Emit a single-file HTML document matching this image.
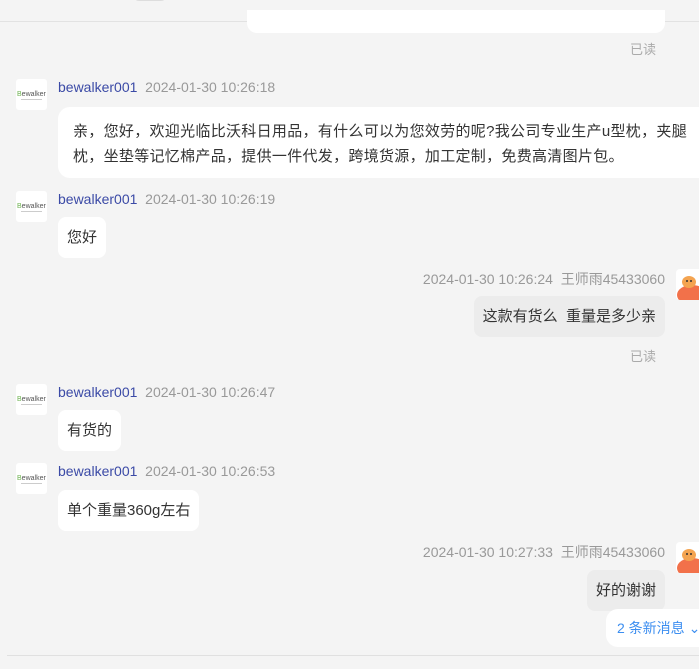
<!DOCTYPE html>
<html><head><meta charset="utf-8"><style>
*{margin:0;padding:0;box-sizing:border-box}
body{width:699px;height:669px;background:#f4f4f4;position:relative;overflow:hidden;font-family:"Liberation Sans","Noto Sans CJK SC",sans-serif;font-size:14px;color:#333}
.a{position:absolute}
.name{color:#3b4aa6;font-size:14px;white-space:nowrap}
.time{color:#999;font-size:14px;white-space:nowrap}
.b{position:absolute;background:#fff;border-radius:8px;padding:0 9px;line-height:41px;white-space:nowrap;font-size:15px}
.g{background:#ececec}
.av{position:absolute;width:31px;height:31px;background:#fff;border-radius:3px;overflow:hidden}
.read{color:#aaa;font-size:13px}
</style></head><body>
<div class="a" style="left:133px;top:-14px;width:34px;height:15px;border:1px solid #ddd;border-radius:6px;background:#f4f4f4"></div>
<div class="a" style="left:0;top:21px;width:699px;height:1px;background:#e2e2e2"></div>
<div class="a" style="left:247px;top:10px;width:418px;height:23px;background:#fff;border-radius:0 0 10px 10px"></div>
<div class="a read" style="right:43px;top:39px">已读</div>

<div class="av" style="left:16px;top:79px"><svg width="31" height="31"><text x="1" y="17" font-size="7" fill="#555" font-family="Liberation Sans"><tspan fill="#6ab04c">B</tspan>ewalker</text><rect x="5" y="20" width="21" height="1" fill="#ccc"/></svg></div>
<div class="a name" style="left:58px;top:79px">bewalker001 <span class="time">&nbsp;2024-01-30 10:26:18</span></div>
<div class="a" style="left:58px;top:107px;width:680px;height:71px;background:#fff;border-radius:12px;padding:12px 0 0 15px;line-height:25px;font-size:15px;letter-spacing:0.3px;white-space:nowrap">亲，您好，欢迎光临比沃科日用品，有什么可以为您效劳的呢?我公司专业生产u型枕，夹腿<br>枕，坐垫等记忆棉产品，提供一件代发，跨境货源，加工定制，免费高清图片包。</div>

<div class="av" style="left:16px;top:191px"><svg width="31" height="31"><text x="1" y="17" font-size="7" fill="#555" font-family="Liberation Sans"><tspan fill="#6ab04c">B</tspan>ewalker</text><rect x="5" y="20" width="21" height="1" fill="#ccc"/></svg></div>
<div class="a name" style="left:58px;top:191px">bewalker001 <span class="time">&nbsp;2024-01-30 10:26:19</span></div>
<div class="b" style="left:58px;top:217px">您好</div>

<div class="a time" style="right:34px;top:269px">2024-01-30 10:26:24 &nbsp;王师雨45433060</div>
<div class="av" style="left:676px;top:269px;border-radius:4px 0 0 4px"><svg width="31" height="31"><ellipse cx="16" cy="26" rx="15" ry="10" fill="#f2714a"/><ellipse cx="13" cy="13" rx="7" ry="6" fill="#f4a451"/><circle cx="11" cy="12" r="1" fill="#333"/><circle cx="15" cy="12" r="1" fill="#333"/></svg></div>
<div class="b g" style="right:34px;top:296px">这款有货么 &nbsp;重量是多少亲</div>
<div class="a read" style="right:43px;top:346px">已读</div>

<div class="av" style="left:16px;top:384px"><svg width="31" height="31"><text x="1" y="17" font-size="7" fill="#555" font-family="Liberation Sans"><tspan fill="#6ab04c">B</tspan>ewalker</text><rect x="5" y="20" width="21" height="1" fill="#ccc"/></svg></div>
<div class="a name" style="left:58px;top:384px">bewalker001 <span class="time">&nbsp;2024-01-30 10:26:47</span></div>
<div class="b" style="left:58px;top:410px">有货的</div>

<div class="av" style="left:16px;top:463px"><svg width="31" height="31"><text x="1" y="17" font-size="7" fill="#555" font-family="Liberation Sans"><tspan fill="#6ab04c">B</tspan>ewalker</text><rect x="5" y="20" width="21" height="1" fill="#ccc"/></svg></div>
<div class="a name" style="left:58px;top:463px">bewalker001 <span class="time">&nbsp;2024-01-30 10:26:53</span></div>
<div class="b" style="left:58px;top:490px">单个重量360g左右</div>

<div class="a time" style="right:34px;top:542px">2024-01-30 10:27:33 &nbsp;王师雨45433060</div>
<div class="av" style="left:676px;top:542px;border-radius:4px 0 0 4px"><svg width="31" height="31"><ellipse cx="16" cy="26" rx="15" ry="10" fill="#f2714a"/><ellipse cx="13" cy="13" rx="7" ry="6" fill="#f4a451"/><circle cx="11" cy="12" r="1" fill="#333"/><circle cx="15" cy="12" r="1" fill="#333"/></svg></div>
<div class="b g" style="right:34px;top:570px">好的谢谢</div>
<div class="a" style="left:606px;top:609px;width:110px;height:38px;background:#fff;border-radius:12px;color:#3c8ef0;line-height:38px;padding-left:11px;font-size:14px;white-space:nowrap">2 条新消息 ⌄</div>
<div class="a" style="left:7px;top:655px;width:692px;height:1px;background:#e0e0e0"></div>
</body></html>
